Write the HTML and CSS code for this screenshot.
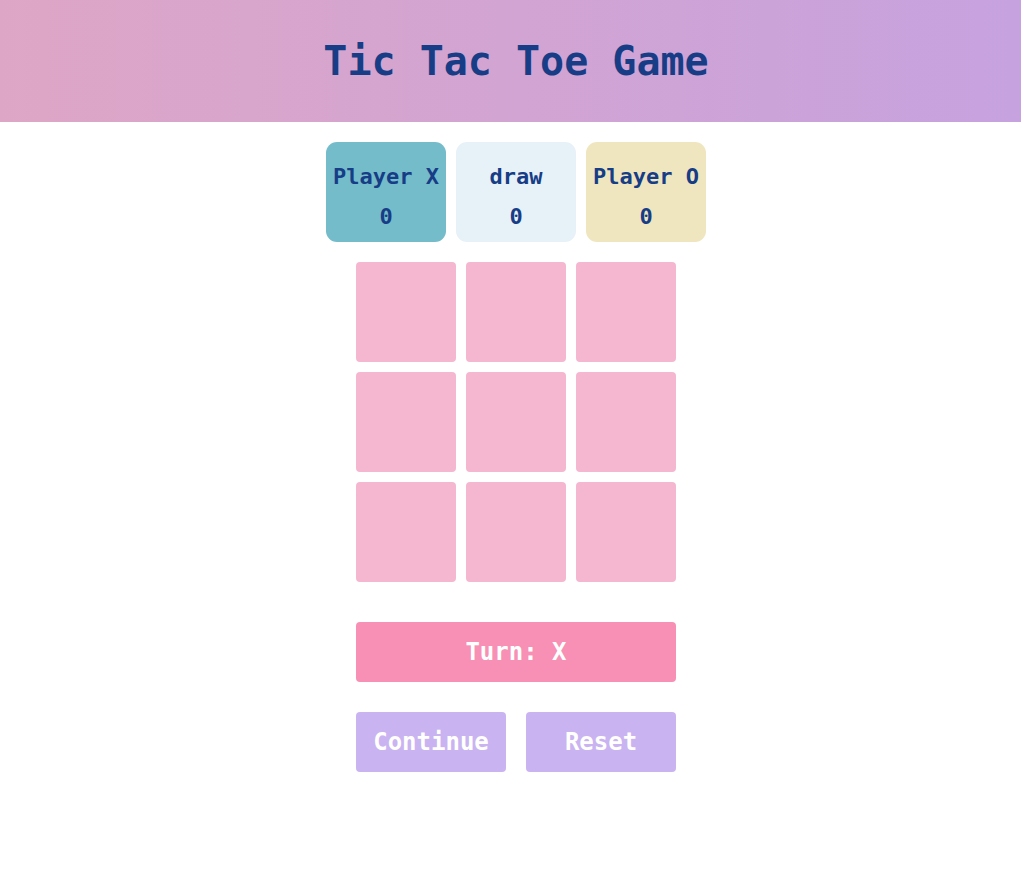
FILE: index.html
```html
<!DOCTYPE html>
<html lang="en">
<head>
<meta charset="utf-8">
<title>Tic Tac Toe Game</title>
<link rel="stylesheet" href="styles.css">
</head>
<body>
<header class="header">
  <h1 class="title">Tic Tac Toe Game</h1>
</header>
<main class="main">
  <section class="scores">
    <div class="score score-x"><div class="score-label">Player X</div><div class="score-value">0</div></div>
    <div class="score score-draw"><div class="score-label">draw</div><div class="score-value">0</div></div>
    <div class="score score-o"><div class="score-label">Player O</div><div class="score-value">0</div></div>
  </section>
  <section class="board">
    <div class="cell"></div><div class="cell"></div><div class="cell"></div>
    <div class="cell"></div><div class="cell"></div><div class="cell"></div>
    <div class="cell"></div><div class="cell"></div><div class="cell"></div>
  </section>
  <div class="turn">Turn: X</div>
  <div class="actions">
    <button class="btn">Continue</button>
    <button class="btn">Reset</button>
  </div>
</main>
</body>
</html>
```
FILE: styles.css
```css
* { box-sizing: border-box; }
html, body { margin: 0; padding: 0; background: #ffffff; }
body {
  font-family: "DejaVu Sans Mono", "Liberation Mono", monospace;
  color: #173d86;
  padding-left: 11px;
}
.header {
  height: 122px;
  margin-left: -11px;
  padding-left: 11px;
  background: linear-gradient(90deg, #dea6c6 0%, #c6a2df 100%);
  display: flex;
  align-items: center;
  justify-content: center;
}
.title {
  margin: 0;
  font-size: 40px;
  font-weight: bold;
  color: #173d86;
}
.main {
  display: flex;
  flex-direction: column;
  align-items: center;
  padding-top: 20px;
}
.scores {
  display: flex;
  gap: 10px;
}
.score {
  width: 120px;
  height: 100px;
  border-radius: 11px;
  padding-top: 15px;
  text-align: center;
  font-weight: bold;
  font-size: 22px;
  line-height: 40px;
}
.score-x { background: #74bcca; }
.score-draw { background: #e7f1f8; }
.score-o { background: #efe6bf; }
.board {
  margin-top: 20px;
  display: grid;
  grid-template-columns: repeat(3, 100px);
  grid-auto-rows: 100px;
  gap: 10px;
}
.cell {
  background: #f4b7cf;
  border-radius: 4px;
}
.turn {
  margin-top: 40px;
  width: 320px;
  height: 60px;
  background: #f790b4;
  border-radius: 4px;
  color: #ffffff;
  font-weight: bold;
  font-size: 24px;
  display: flex;
  align-items: center;
  justify-content: center;
}
.actions {
  margin-top: 30px;
  display: flex;
  gap: 20px;
}
.btn {
  width: 150px;
  height: 60px;
  border: none;
  border-radius: 4px;
  background: #c9b3f0;
  color: #ffffff;
  font-family: "DejaVu Sans Mono", "Liberation Mono", monospace;
  font-weight: bold;
  font-size: 24px;
  padding: 0;
}
```
